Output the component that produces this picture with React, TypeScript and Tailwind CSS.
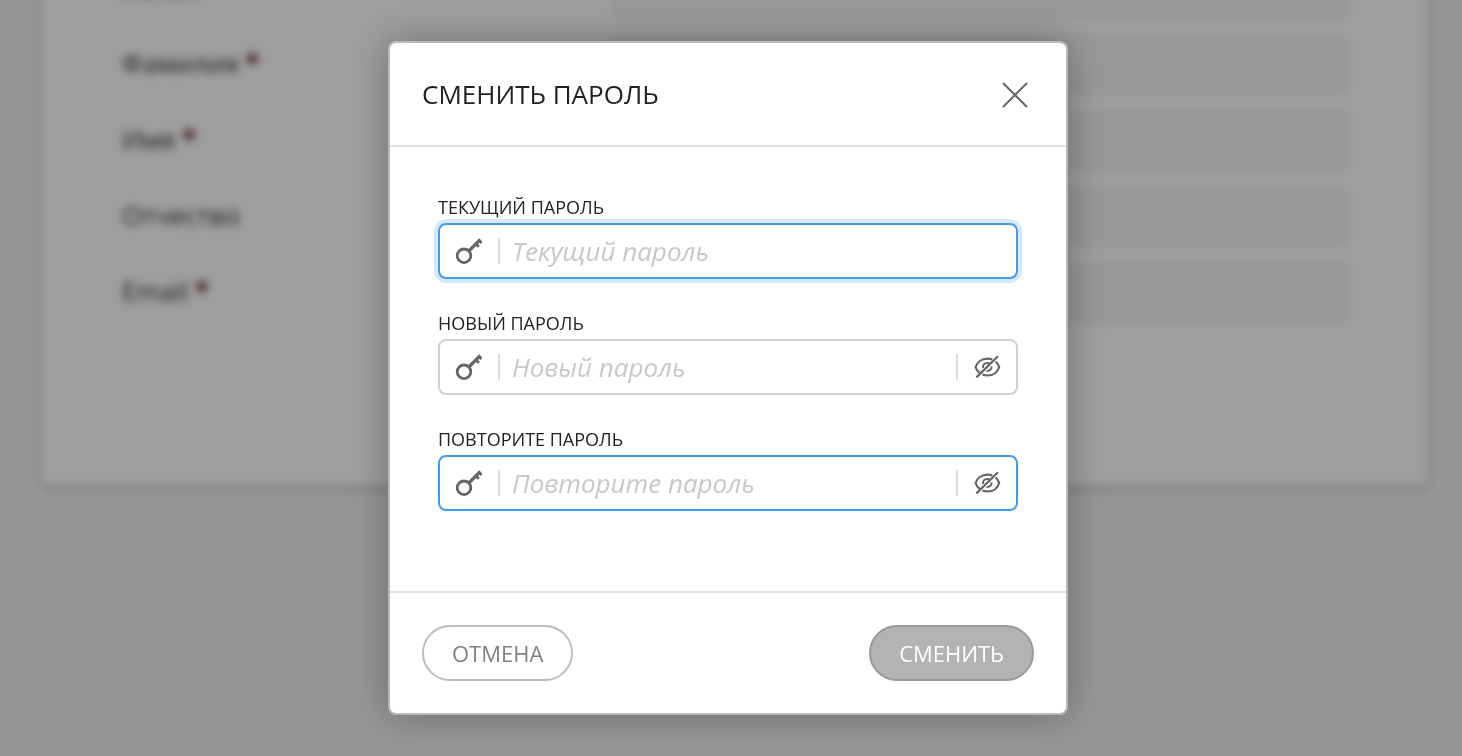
import { useState } from "react";
import clsx from "clsx";

interface ProfileField {
  id: string;
  label: string;
  required?: boolean;
}

interface PasswordFieldProps {
  id: string;
  label: string;
  canReveal?: boolean;
  active?: boolean;
  focused?: boolean;
  value: string;
  onChange: (value: string) => void;
}

const profileFields: ProfileField[] = [
  { id: "login", label: "Логин" },
  { id: "lastName", label: "Фамилия", required: true },
  { id: "firstName", label: "Имя", required: true },
  { id: "middleName", label: "Отчество" },
  { id: "email", label: "Email", required: true },
];

function KeyIcon() {
  return (
    <svg width="28" height="28" viewBox="0 0 28 28" fill="none" stroke="#666" aria-hidden="true">
      <circle cx="10" cy="18.8" r="6.8" strokeWidth="2.8" />
      <path d="M14.8 14 L26.3 2.5" strokeWidth="3.2" />
      <path d="M21.5 6.5 L24.8 9.8" strokeWidth="3" />
      <path d="M24.8 3.2 L27.6 6" strokeWidth="2.6" />
    </svg>
  );
}

function EyeOffIcon() {
  return (
    <svg
      width="28"
      height="28"
      viewBox="0 0 28 28"
      fill="none"
      stroke="#666"
      strokeWidth="2.2"
      aria-hidden="true"
    >
      <path d="M18.3 6.6 C16.9 6 15.3 5.7 13.5 5.7 C7.5 5.7 3 9.2 1.6 14 C2.3 16.6 3.8 18.6 5.9 20" />
      <path d="M8.4 21.6 C9.9 22.2 11.6 22.5 13.5 22.5 C19.5 22.5 23.8 18.8 25.2 14 C24.6 11.8 23.4 9.9 21.6 8.5" />
      <path d="M9.2 15 C8.4 12.2 10.4 10 13.3 10 C14.2 10 15 10.2 15.6 10.6" strokeWidth="2" />
      <path d="M12.6 18 C15.6 18.2 17.8 16.2 17.5 13.4" strokeWidth="2" />
      <path d="M2.4 24.4 L24 3.2" />
    </svg>
  );
}

function PasswordField({
  id,
  label,
  canReveal,
  active,
  focused,
  value,
  onChange,
}: PasswordFieldProps) {
  const [visible, setVisible] = useState(false);

  return (
    <div className="flex flex-col gap-1">
      <label htmlFor={id} className="text-lg leading-6 text-[#222]">
        {label}
      </label>
      <div
        className={clsx(
          "flex h-14 items-center rounded-lg border-2 bg-white px-[14px]",
          active ? "border-[#429cee]" : "border-[#d0d0d0]",
          focused && "ring-4 ring-[#d6e8fc]"
        )}
      >
        <KeyIcon />
        <span className="ml-4 h-[26px] w-0.5 bg-[#dcdcdc]" />
        <input
          id={id}
          type={visible ? "text" : "password"}
          placeholder={label.charAt(0) + label.slice(1).toLowerCase()}
          value={value}
          onChange={(e) => onChange(e.target.value)}
          className="h-full min-w-0 flex-1 px-3 text-[26px] text-[#222] outline-none placeholder:text-[#c8c8c8] placeholder:[font-style:oblique_20deg]"
        />
        {canReveal && (
          <>
            <span className="mr-4 h-[26px] w-0.5 bg-[#dcdcdc]" />
            <button
              type="button"
              aria-label="Показать пароль"
              onClick={() => setVisible(!visible)}
            >
              <EyeOffIcon />
            </button>
          </>
        )}
      </div>
    </div>
  );
}

export default function App() {
  const [current, setCurrent] = useState("");
  const [next, setNext] = useState("");
  const [repeat, setRepeat] = useState("");

  return (
    <div className="h-screen overflow-hidden bg-[#f2f2f2] font-['Open_Sans','Noto_Sans',sans-serif]">
      {/* Profile form behind the dialog */}
      <main className="-mt-16 pr-[34px] pl-[42px] blur-[4px]" inert>
        <div className="flex flex-col gap-[18px] rounded-lg bg-white px-20 pt-6 pb-[164px] shadow-[0_2px_6px_rgba(0,0,0,0.3)]">
          {profileFields.map((field) => (
            <div key={field.id} className="flex items-start">
              <label htmlFor={field.id} className="w-2/5 text-[26px] leading-[54px] text-[#333]">
                {field.label}
                {field.required && <span className="font-bold text-[#5a1010]"> *</span>}
              </label>
              <input
                id={field.id}
                disabled
                className="h-[58px] w-3/5 rounded-lg border-2 border-[#e8e8e8] bg-[#f5f5f5]"
              />
            </div>
          ))}
        </div>
      </main>

      {/* Overlay */}
      <div className="fixed inset-0 flex items-center justify-center bg-black/38 pr-1.5">
        <div
          role="dialog"
          aria-modal="true"
          aria-labelledby="dialog-title"
          className="w-full max-w-[680px] rounded-lg border-2 border-[#b9b9b9] bg-white shadow-[0_0_40px_rgba(0,0,0,0.3)]"
        >
          <header className="flex h-[104px] items-center justify-between border-b-2 border-[#e0e0e0] px-8">
            <h2 id="dialog-title" className="text-[26px] text-[#222]">
              СМЕНИТЬ ПАРОЛЬ
            </h2>
            <button type="button" aria-label="Закрыть" className="p-1">
              <svg width="30" height="30" viewBox="0 0 30 30" stroke="#666" strokeWidth="2">
                <path d="M3 4 L27 28 M27 4 L3 28" />
              </svg>
            </button>
          </header>

          <form id="password-form" className="flex flex-col gap-8 px-12 pt-12 pb-20">
            <PasswordField
              id="current"
              label="ТЕКУЩИЙ ПАРОЛЬ"
              active
              focused
              value={current}
              onChange={setCurrent}
            />
            <PasswordField
              id="next"
              label="НОВЫЙ ПАРОЛЬ"
              canReveal
              value={next}
              onChange={setNext}
            />
            <PasswordField
              id="repeat"
              label="ПОВТОРИТЕ ПАРОЛЬ"
              canReveal
              active
              value={repeat}
              onChange={setRepeat}
            />
          </form>

          <footer className="flex justify-between border-t-2 border-[#e0e0e0] p-8">
            <button
              type="button"
              className="h-14 rounded-full border-2 border-[#bdbdbd] px-7 text-[22px] text-[#808080]"
            >
              ОТМЕНА
            </button>
            <button
              type="submit"
              form="password-form"
              disabled={!current || !next || next !== repeat}
              className="h-14 rounded-full border-2 border-[#999] bg-[#b3b3b3] px-7 text-[22px] text-white"
            >
              СМЕНИТЬ
            </button>
          </footer>
        </div>
      </div>
    </div>
  );
}
